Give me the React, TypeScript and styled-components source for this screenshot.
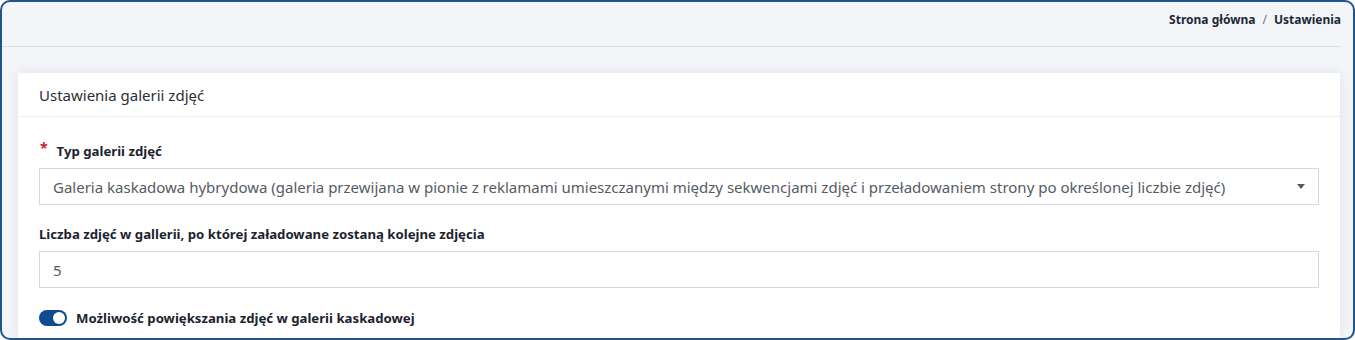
import styled, { createGlobalStyle } from "styled-components";

const GlobalStyle = createGlobalStyle`
  html, body {
    margin: 0;
    padding: 0;
    background: #ffffff;
  }
  * {
    box-sizing: border-box;
  }
  body {
    font-family: "Noto Sans", "Open Sans", sans-serif;
  }
`;

const App = () => {
  return (
    <>
      <GlobalStyle />
      <Frame>
        <TopBar>
          <Breadcrumb>
            <Crumb>Strona główna</Crumb>
            <Separator>/</Separator>
            <Crumb>Ustawienia</Crumb>
          </Breadcrumb>
        </TopBar>
        <Content>
          <Card>
            <CardHeader>Ustawienia galerii zdjęć</CardHeader>
            <CardBody>
              <Field>
                <Label required>Typ galerii zdjęć</Label>
                <Select>
                  <SelectText>
                    Galeria kaskadowa hybrydowa (galeria przewijana w pionie z reklamami umieszczanymi między
                    sekwencjami zdjęć i przeładowaniem strony po określonej liczbie zdjęć)
                  </SelectText>
                  <Caret />
                </Select>
              </Field>
              <Field>
                <Label>Liczba zdjęć w gallerii, po której załadowane zostaną kolejne zdjęcia</Label>
                <Input>5</Input>
              </Field>
              <SwitchRow>
                <Switch on />
                <SwitchLabel>Możliwość powiększania zdjęć w galerii kaskadowej</SwitchLabel>
              </SwitchRow>
            </CardBody>
          </Card>
        </Content>
      </Frame>
    </>
  );
};

const Frame = styled.div`
  height: 340px;
  border: 2px solid #23538f;
  border-radius: 10px;
  overflow: hidden;
  background: #f3f5f9;
  display: flex;
  flex-direction: column;
`;

const TopBar = styled.div`
  height: 45px;
  flex-shrink: 0;
  margin: 0 12px 0 0;
  border-bottom: 1px solid #dcdfe4;
  display: flex;
  justify-content: flex-end;
  align-items: flex-start;
  padding-top: 9px;
`;

const Breadcrumb = styled.div`
  display: flex;
  align-items: center;
  gap: 7px;
  font-size: 12px;
  font-weight: 700;
  color: #1d2838;
`;

const Crumb = styled.span``;

const Separator = styled.span`
  color: #6c757d;
  font-weight: 400;
`;

const Content = styled.div`
  flex: 1;
  padding: 26px 13px 0 16px;
`;

const Card = styled.div`
  background: #ffffff;
  height: 100%;
  box-shadow: 0 0 12px rgba(30, 40, 60, 0.09);
`;

const CardHeader = styled.div`
  height: 44px;
  padding: 0 21px;
  display: flex;
  align-items: center;
  border-bottom: 1px solid #f0f1f3;
  font-size: 15px;
  color: #2b2f36;
`;

const CardBody = styled.div`
  padding: 25px 21px 0 21px;
  display: flex;
  flex-direction: column;
`;

const Field = styled.div`
  display: flex;
  flex-direction: column;
  gap: 8px;
  margin-bottom: 20px;
`;

const Label = styled.label<{ required?: boolean }>`
  font-size: 13.2px;
  font-weight: 700;
  color: #1d2430;
  line-height: 18px;
  display: flex;
  align-items: center;

  &::before {
    content: ${(p) => (p.required ? '"*"' : "none")};
    color: #c8232c;
    font-size: 14px;
    margin: -7px 9px 0 1px;
  }
`;

const Select = styled.div`
  height: 37px;
  border: 1px solid #d5d8dc;
  display: flex;
  align-items: center;
  padding: 0 13px;
  gap: 12px;
`;

const SelectText = styled.span`
  flex: 1;
  font-size: 15px;
  color: #555b63;
  white-space: nowrap;
  overflow: hidden;
`;

const Caret = styled.span`
  width: 0;
  height: 0;
  border-left: 4px solid transparent;
  border-right: 4px solid transparent;
  border-top: 5px solid #555b63;
  margin-right: 0;
`;

const Input = styled.div`
  height: 37px;
  border: 1px solid #d5d8dc;
  display: flex;
  align-items: center;
  padding: 0 13px;
  font-size: 15px;
  color: #555b63;
`;

const SwitchRow = styled.div`
  display: flex;
  align-items: center;
  gap: 9px;
  margin-top: 1px;
`;

const Switch = styled.span<{ on?: boolean }>`
  position: relative;
  width: 28px;
  height: 16px;
  border-radius: 8px;
  background: ${(p) => (p.on ? "#0f4c8f" : "#c9ced6")};

  &::after {
    content: "";
    position: absolute;
    top: 2px;
    left: ${(p) => (p.on ? "14px" : "2px")};
    width: 12px;
    height: 12px;
    border-radius: 50%;
    background: #ffffff;
  }
`;

const SwitchLabel = styled.span`
  font-size: 13.2px;
  font-weight: 700;
  color: #1d2430;
`;

export default App;
